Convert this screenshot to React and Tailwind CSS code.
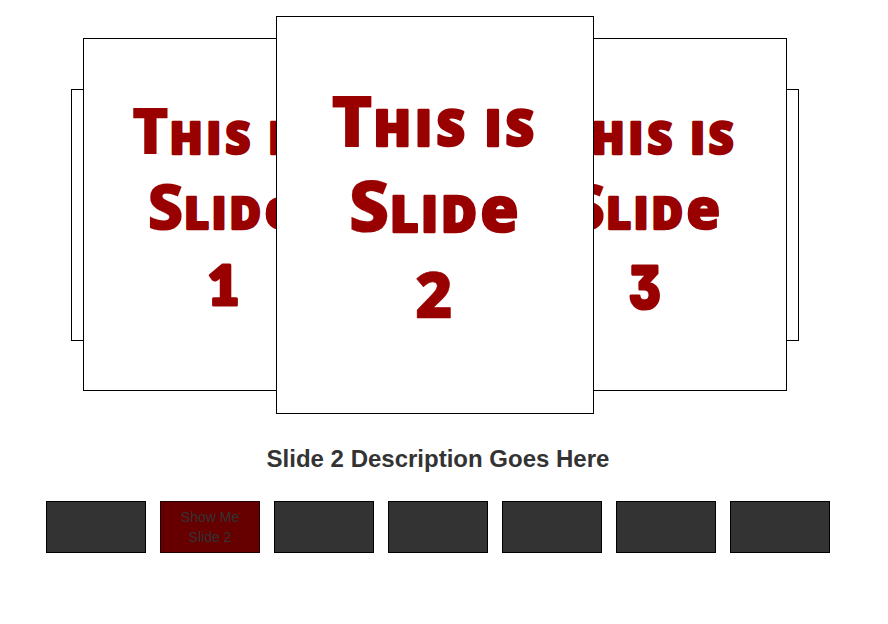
const slides = [
  { id: 'rear-left', box: 'left-[71px] top-[89px] h-[252px] w-[202px]' },
  { id: 'rear-right', box: 'left-[597px] top-[89px] h-[252px] w-[202px]' },
  { id: 'left', number: '1', box: 'left-[83px] top-[38px] h-[353px] w-[282px]' },
  { id: 'right', number: '3', box: 'left-[505px] top-[38px] h-[353px] w-[282px]' },
  { id: 'front', number: '2', box: 'left-[276px] top-[16px] h-[398px] w-[318px]' },
];

// Large initials with heavier, shorter capitals following them.
function SlideArt({ number }) {
  return (
    <svg
      viewBox="0 0 318 398"
      preserveAspectRatio="none"
      className="absolute -left-px -top-px h-[calc(100%+2px)] w-[calc(100%+2px)] fill-[#990000] stroke-[#990000] font-['Open_Sans',sans-serif] font-extrabold"
      strokeLinejoin="round"
    >
      <text y="131" fontSize="71">
        <tspan x="55" strokeWidth="0.2">T</tspan>
        <tspan x="97.5 139 160.5 195 208.5 229.5" y="130.3" fontSize="49" strokeWidth="2.6">HIS IS</tspan>
      </text>
      <text y="216" fontSize="71">
        <tspan x="72.5" strokeWidth="0.2">S</tspan>
        <tspan x="114 145 165" y="215.5" fontSize="49" strokeWidth="2.6">LID</tspan>
        <tspan x="204" y="215.5" fontSize="63" strokeWidth="1.6">e</tspan>
      </text>
      {number === '1' && (
        <text x="158.5" y="300.5" fontSize="62" strokeWidth="3.4" textAnchor="middle" className="font-[Lato,sans-serif]">1</text>
      )}
      {number === '2' && (
        <text x="158" y="302" fontSize="64" strokeWidth="0.6" textAnchor="middle">2</text>
      )}
      {number === '3' && (
        <text
          transform="translate(157.5 304) scale(0.84 1)"
          fontSize="65"
          strokeWidth="3.6"
          textAnchor="middle"
          className="font-[Inter,sans-serif] [font-feature-settings:'cv09']"
        >
          3
        </text>
      )}
    </svg>
  );
}

export default function App() {
  return (
    <main className="h-[624px] w-[888px] overflow-hidden bg-white font-['Liberation_Sans',Arial,sans-serif] text-[#333333]">
      <section className="relative h-[438px]">
        {slides.map((s) => (
          <div key={s.id} className={`absolute overflow-hidden border border-black bg-white ${s.box}`}>
            {s.number && <SlideArt number={s.number} />}
          </div>
        ))}
      </section>
      <h2 className="flex h-[63px] w-[876px] justify-center pt-[5px] text-2xl font-bold">
        Slide 2 Description Goes Here
      </h2>
      <nav className="flex gap-[14px] pl-[46px]">
        {[1, 2, 3, 4, 5, 6, 7].map((n) => (
          <button
            key={n}
            aria-label={`Slide ${n}`}
            className={
              n === 2
                ? 'flex h-[52px] w-[100px] items-center justify-center border border-[#220000] bg-[#660000] px-4 text-center text-sm leading-5'
                : 'h-[52px] w-[100px] border border-black bg-[#333333]'
            }
          >
            {n === 2 && <span>Show Me<br />Slide 2</span>}
          </button>
        ))}
      </nav>
    </main>
  );
}
